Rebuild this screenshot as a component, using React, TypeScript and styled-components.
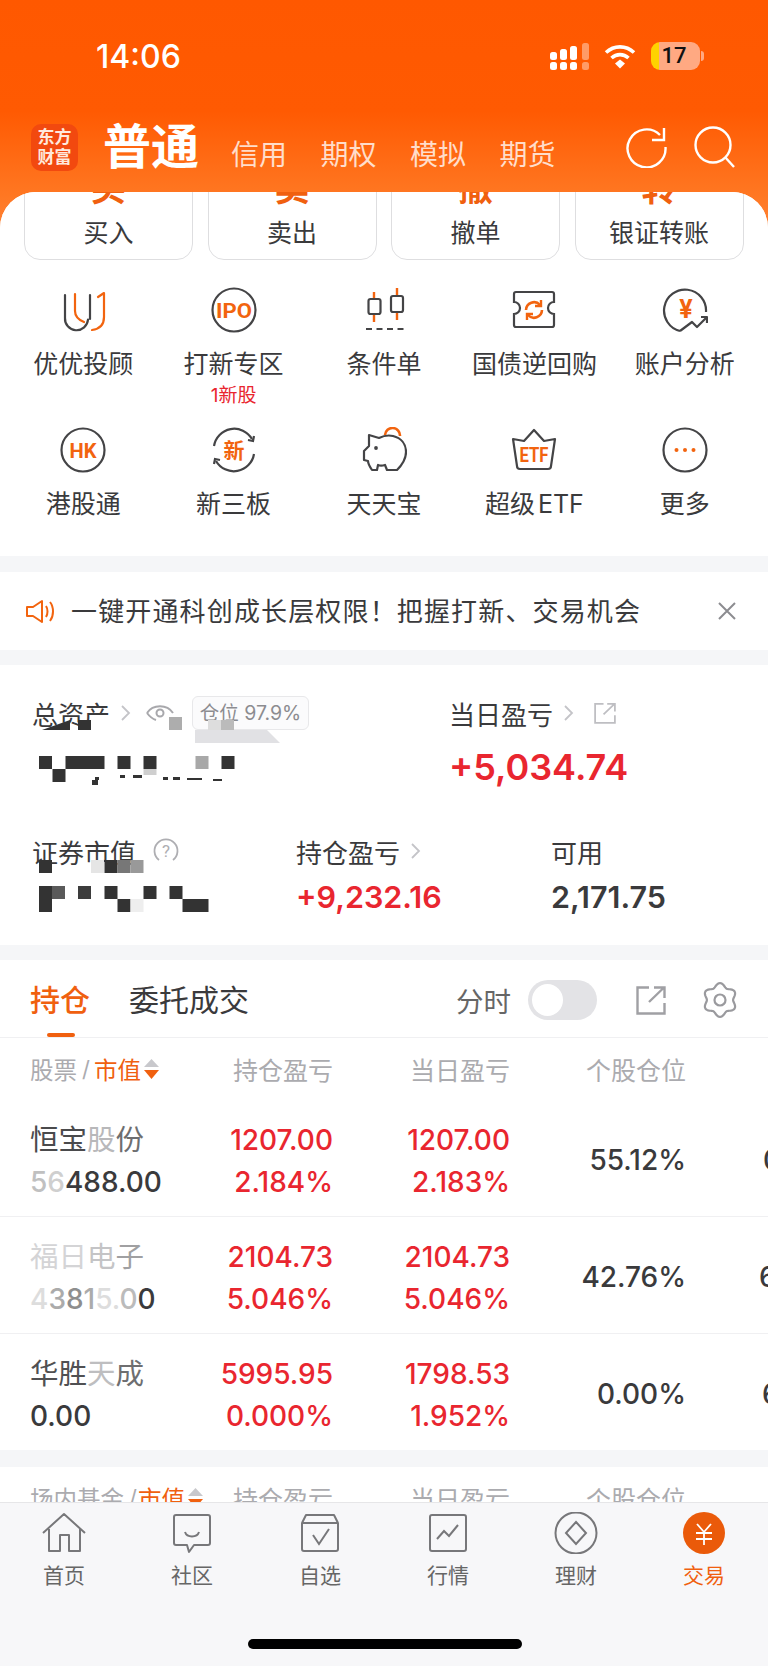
import React from 'react';
import styled, { createGlobalStyle } from 'styled-components';

const RED = '#E9262F';
const ORANGE = '#F0600F';
const INK = '#3A3A3C';

const Global = createGlobalStyle`
  html, body { margin: 0; padding: 0; background: #fff; }
  body { font-family: Inter, "Noto Sans CJK SC", sans-serif; color: ${INK}; }
  * { box-sizing: border-box; }
`;

const Page = styled.div`
  width: 768px; height: 1666px; overflow: hidden;
  display: flex; flex-direction: column; background: #F5F6F8;
`;

/* Every drawn icon shares this base; $ml is its distance from the item before it. */
const Glyph = styled.svg<{ $ml?: number }>`
  display: block; flex: none; margin-left: ${p => p.$ml ?? 0}px;
`;

/* ---------- header ---------- */
const Header = styled.header`
  flex: none; height: 232px;
  background: linear-gradient(180deg, #FF5800 0%, #FF5A02 48%, #FF7722 84%, #FF8336 100%);
  color: #fff;
`;
const StatusRow = styled.div`
  height: 112px; padding: 0 65px 0 96px;
  display: flex; align-items: center; gap: 14px;
`;
const Clock = styled.div`
  font-size: 32px; font-weight: 500; margin-right: auto;
`;
const Battery = styled.div`
  position: relative; width: 49px; height: 28px; border-radius: 9px; margin-left: 1px; margin-right: 3px;
  background: linear-gradient(90deg, #FFD200 0 8px, #FFA982 8px);
  color: #111; font: 500 22px/28px Roboto, sans-serif; text-align: center; padding-right: 3px;
  &::after {
    content: ''; position: absolute; right: -4px; top: 9px; width: 3px; height: 10px;
    border-radius: 0 3px 3px 0; background: #FFA982;
  }
`;
const TitleRow = styled.div`
  height: 70px; padding: 0 33px 0 31px; display: flex; align-items: center;
`;
const Logo = styled.div`
  width: 47px; height: 47px; border-radius: 10px; background: #F2490F; flex: none;
  font-size: 17px; line-height: 20px; font-weight: 700; text-align: center; padding-top: 3px;
  color: #FFE9DC;
`;
const ActiveMode = styled.div`
  font-size: 48px; line-height: 56px; font-weight: 700; margin: 0 32px 0 25px;
`;
const ModeList = styled.div`
  display: flex; gap: 33.5px; margin-top: 15px; flex: 1;
`;
const Mode = styled.span`
  font-size: 28px; line-height: 34px; color: rgba(255, 255, 255, 0.78);
`;
const HeaderActions = styled.div`
  display: flex; gap: 27px; align-items: center;
`;

/* ---------- panel + quick actions ---------- */
const Panel = styled.main`
  flex: 1; min-height: 0; margin-top: -40px; overflow: hidden;
  border-radius: 36px 36px 0 0; background: #F5F6F8;
`;
const TopCard = styled.section`
  background: #fff; padding-bottom: 36px;
`;
const TradeRow = styled.div`
  height: 68px; padding: 0 24px; display: grid;
  grid-template-columns: repeat(4, 169px); column-gap: 14.5px; overflow: hidden;
`;
const TradeButton = styled.div`
  height: 90px; margin-top: -22px; border: 1px solid #DEDEE0; border-radius: 16px;
  text-align: center; background: #fff;
`;
const TradeGlyph = styled.div`
  font-size: 35px; line-height: 35px; font-weight: 700; color: ${ORANGE};
`;
const TradeLabel = styled.div`
  font-size: 25px; line-height: 28px; margin-top: 13px; color: ${INK};
`;
const ToolGrid = styled.div`
  padding: 27px 8px 0; display: grid;
  grid-template-columns: repeat(5, 1fr); grid-template-rows: 140px 93px;
`;
const Tool = styled.div`
  display: flex; flex-direction: column; align-items: center;
`;
const ToolName = styled.div`
  font-size: 25px; line-height: 30px; margin-top: 16px; color: ${INK}; white-space: nowrap; word-spacing: -4px;
`;
const ToolNote = styled.div`
  font-size: 19px; line-height: 20px; margin-top: 7px; color: ${RED};
`;

/* ---------- notice ---------- */
const Notice = styled.section`
  height: 78px; margin-top: 16px; padding: 0 31px 0 25px; background: #fff;
  display: flex; align-items: center; justify-content: space-between;
`;
const NoticeText = styled.div`
  font-size: 26px; letter-spacing: 1.15px; color: ${INK}; margin: 0 0 3px 17px; flex: 1; white-space: nowrap;
`;

/* ---------- assets ---------- */
const Assets = styled.section`
  position: relative; height: 280px; margin-top: 15px; padding: 35px 0 0 32px; background: #fff;
`;
const AssetRow = styled.div<{ $cols: string; $top: number }>`
  display: grid; grid-template-columns: ${p => p.$cols}; margin-top: ${p => p.$top}px;
`;
const AssetLabel = styled.div`
  display: flex; align-items: center; height: 26px; font-size: 26px; color: ${INK}; white-space: nowrap;
`;
const AssetValue = styled.div<{ $size: number; $red?: boolean; $gap: number }>`
  font-size: ${p => p.$size}px; line-height: 40px; font-weight: 600; margin-top: ${p => p.$gap}px;
  color: ${p => (p.$red ? RED : INK)};
`;
const Ratio = styled.span`
  position: absolute; left: 192px; top: 31px; height: 34px; width: 117px; border: 1px solid #E8E8EA;
  border-radius: 6px; font-size: 19.5px; line-height: 32px; color: #8C8C90; text-align: center; background: #FBFBFC;
`;
const Mosaic = styled.svg`
  position: absolute; left: 0; top: 50px;
`;

/* ---------- holdings ---------- */
const Holdings = styled.section`
  margin-top: 15px; background: #fff;
`;
const TabBar = styled.div`
  height: 78px; padding: 3px 30px 0; display: flex; align-items: center; border-bottom: 1px solid #F0F0F2;
`;
const Tab = styled.div<{ $on?: boolean }>`
  position: relative; font-size: 30px; line-height: 40px; margin-right: 39px;
  color: ${p => (p.$on ? ORANGE : INK)}; font-weight: ${p => (p.$on ? 500 : 400)};
  ${p => p.$on && `
    &::after {
      content: ''; position: absolute; left: 17px; bottom: -17px; width: 28px; height: 4px;
      border-radius: 2px; background: ${ORANGE};
    }
  `}
`;
const TabTools = styled.div`
  margin-left: auto; display: flex; align-items: center;
`;
const TabHint = styled.span`
  font-size: 27.5px; color: #666; margin-right: 17px;
`;
const Toggle = styled.div`
  width: 69px; height: 40px; border-radius: 20px; background: #E3E3E6; padding: 4px; margin-right: 39px;
  &::before { content: ''; display: block; width: 31px; height: 32px; border-radius: 50%; background: #fff; }
`;
const ColumnRow = styled.div`
  display: grid; grid-template-columns: 170px 163px 177px 176px; height: 62px; align-items: center;
  font-size: 25px; color: #ABABAF; text-align: right; padding-bottom: 1px; white-space: nowrap;
`;
const SortHead = styled.div`
  display: flex; align-items: center; padding-left: 30px; white-space: nowrap; text-align: left; font-size: 23.5px;
`;
const Slash = styled.span`
  margin-left: 5px; font-size: 22px;
`;
const SortOn = styled.span<{ $gap: number }>`
  color: ${ORANGE}; margin-left: ${p => p.$gap}px;
`;
const StockRow = styled.div<{ $last?: boolean }>`
  display: grid; grid-template-columns: 170px 163px 177px 176px 82px; height: ${p => (p.$last ? 116 : 117)}px;
  padding-top: 19px; font-size: 28px; line-height: 42px; font-weight: 500; text-align: right; white-space: nowrap;
  border-bottom: ${p => (p.$last ? 'none' : '1px solid #F0F0F2')}; overflow: hidden;
`;
const NameCell = styled.div`
  padding-left: 30px; text-align: left; font-weight: 400; color: ${INK};
`;
const StockName = styled.div`
  font-size: 28.5px; font-weight: 400;
`;
const Amount = styled.div`
  font-weight: 500;
`;
const Tone = styled.span<{ $c: string }>`
  color: ${p => p.$c};
`;
const Gain = styled.div`
  color: ${RED};
`;
const Share = styled.div`
  padding-top: 20px; color: ${INK};
`;
const NextColumn = styled.div<{ $lead: number }>`
  padding: 20px 0 0 ${p => p.$lead}px; text-align: left; color: ${INK};
`;
const FundHead = styled.section`
  margin-top: 17px; background: #fff; height: 120px;
`;

/* ---------- bottom navigation ---------- */
const Nav = styled.nav`
  flex: none; height: 164px; background: #F7F7F9; border-top: 1px solid #E6E6E8; position: relative;
  display: grid; grid-template-columns: repeat(6, 1fr); align-items: start; padding-top: 9px;
`;
const NavItem = styled.div<{ $on?: boolean }>`
  display: flex; flex-direction: column; align-items: center;
  font-size: 21px; line-height: 28px; color: ${p => (p.$on ? ORANGE : '#666')};
`;
const NavLabel = styled.span`
  margin-top: 8px;
`;
const HomeBar = styled.div`
  position: absolute; left: 248px; top: 136px; width: 274px; height: 10px; border-radius: 5px; background: #000;
`;

/* ---------- drawings ---------- */
const S = '#444446';
const O = '#F2640F';

const Draw: React.FC<{ size?: number; w?: number; h?: number; children: React.ReactNode }> = ({ size = 46, w, h, children }) => (
  <Glyph width={w ?? size} height={h ?? size} viewBox={`0 0 ${w ?? size} ${h ?? size}`} fill="none">
    {children}
  </Glyph>
);

/* Condensed orange lettering inside the round tool icons. */
const Mark: React.FC<{ x?: number; y?: number; fs?: number; fit?: number; children: React.ReactNode }> = ({ x = 23, y = 29, fs = 17, fit, children }) => (
  <text
    x={x} y={y} fontSize={fs} fontWeight={700} fill={O} textAnchor="middle"
    fontFamily='Roboto, "Noto Sans CJK SC", sans-serif'
    {...(fit ? { textLength: fit, lengthAdjust: 'spacingAndGlyphs' as const } : {})}
  >{children}</text>
);

const Ring = () => <circle cx="23" cy="23" r="21.5" stroke={S} strokeWidth="2.2" />;

const tools: { name: string; note?: string; icon: React.ReactNode }[] = [
  {
    name: '优优投顾',
    icon: (
      <Draw>
        <path d="M5 8V31a11.5 11.5 0 0 0 23 1.5" stroke={S} strokeWidth="2.2" strokeLinecap="round" />
        <path d="M30 8V32" stroke={S} strokeWidth="2.2" strokeLinecap="round" />
        <path d="M15 7V24c0 6 4 9 9 11" stroke={O} strokeWidth="2.2" strokeLinecap="round" />
        <path d="M32 43c8-1 12-6 12-13V6l-6 4" stroke={O} strokeWidth="2.2" strokeLinecap="round" strokeLinejoin="round" />
      </Draw>
    ),
  },
  { name: '打新专区', note: '1新股', icon: <Draw><Ring /><Mark fs={21} y={30.5} fit={36}>IPO</Mark></Draw> },
  {
    name: '条件单',
    icon: (
      <Draw>
        <path d="M13 5V35M36 1V33" stroke={O} strokeWidth="2.4" />
        <rect x="7.5" y="12" width="12" height="15" rx="2" fill="#fff" stroke={S} strokeWidth="2.2" />
        <rect x="30" y="9" width="12" height="16" rx="2" fill="#fff" stroke={S} strokeWidth="2.2" />
        <path d="M5 42H45" stroke={S} strokeWidth="2.2" strokeDasharray="6 4.5" />
      </Draw>
    ),
  },
  {
    name: '国债逆回购',
    icon: (
      <Draw>
        <path d="M5 5H41a2 2 0 0 1 2 2V15a6 6 0 0 0 0 12V38a2 2 0 0 1-2 2H5a2 2 0 0 1-2-2V27a6 6 0 0 0 0-12V7a2 2 0 0 1 2-2Z" stroke={S} strokeWidth="2.2" />
        <path d="M15 23a8 8 0 0 1 14-5M31 23a8 8 0 0 1-14 5" stroke={O} strokeWidth="2.6" />
        <path d="M30 13v6h-6M16 33v-6h6" stroke={O} strokeWidth="2.4" />
      </Draw>
    ),
  },
  {
    name: '账户分析',
    icon: (
      <Draw>
        <path d="M18 44A21 21 0 1 1 44 25" stroke={S} strokeWidth="2.2" />
        <path d="M18 44L30 35L35 40L45 30M39 30H45V36" stroke={S} strokeWidth="2.2" strokeLinejoin="round" />
        <Mark x={24} y={31} fs={25}>¥</Mark>
      </Draw>
    ),
  },
  { name: '港股通', icon: <Draw><Ring /><Mark y={30.5} fs={21} fit={27}>HK</Mark></Draw> },
  {
    name: '新三板',
    icon: (
      <Draw>
        <path d="M3 19A20.5 20.5 0 0 1 41 12" stroke={S} strokeWidth="2.2" />
        <path d="M43 27A20.5 20.5 0 0 1 5 34" stroke={S} strokeWidth="2.2" />
        <path d="M37 13l5 1 1-5M9 33l-5-1-1 5" stroke={S} strokeWidth="2.2" />
        <Mark y={30.5} fs={21}>新</Mark>
      </Draw>
    ),
  },
  {
    name: '天天宝',
    icon: (
      <Draw>
        <path d="M24 8a7.5 7.5 0 0 1 15 1" stroke={O} strokeWidth="2.6" />
        <path d="M8 8L18 11C22 9 28 8 32 9C40 11 45 17 45 25C45 33 41 38 36 43H26L24 38C21 39 19 39 17 38L16 43H11C9 40 7 36 7 34L3 33V24L8 19Z" stroke={S} strokeWidth="2.2" strokeLinejoin="round" />
        <circle cx="15" cy="21" r="1.900" fill={S} />
      </Draw>
    ),
  },
  {
    name: '超级 ETF',
    icon: (
      <Draw>
        <path d="M2 12L13 14L23 3L33 14L44 12L40 39a3 3 0 0 1-3 3H9a3 3 0 0 1-3-3Z" stroke={S} strokeWidth="2.2" strokeLinejoin="round" />
        <Mark y={35} fs={21} fit={29}>ETF</Mark>
      </Draw>
    ),
  },
  {
    name: '更多',
    icon: (
      <Draw>
        <Ring />
        <circle cx="14.500" cy="23" r="2" fill={O} />
        <circle cx="23" cy="23" r="2" fill={O} />
        <circle cx="31.500" cy="23" r="2" fill={O} />
      </Draw>
    ),
  },
];

const Chevron = () => (
  <Glyph $ml={10} width="11" height="18" viewBox="0 0 11 18" fill="none">
    <path d="M2 2L9 9L2 16" stroke="#C4C4C8" strokeWidth="1.800" />
  </Glyph>
);

const Launch: React.FC<{ size: number; color: string; ml: number }> = ({ size, color, ml }) => (
  <Glyph $ml={ml} width={size} height={size} viewBox="0 0 30 30" fill="none">
    <path d="M13 2.500H1.500V28.500H28.500V18" stroke={color} strokeWidth="2.400" />
    <path d="M13 17L28 2.500M18 2.500H28.500V13" stroke={color} strokeWidth="2.400" />
  </Glyph>
);

/* Six-lobed outline of the settings wheel, traced around its centre. */
const gearOutline = (() => {
  const pts: string[] = [];
  for (let i = 0; i < 96; i++) {
    const a = (i / 96) * Math.PI * 2;
    const r = 15 + 1.900 * Math.cos(6 * a);
    pts.push(`${(18 + r * Math.sin(a)).toFixed(2)} ${(18 - r * Math.cos(a)).toFixed(2)}`);
  }
  return `M${pts.join('L')}Z`;
})();

/* Privacy squares laid over the balances; coordinates are x, y, w, h, fill. */
const blocks: [number, number, number, number, string][] = [
  [78, 5, 13, 10, '#333'], [169, 2, 13, 13, '#ADADAD'], [208, 5, 13, 10, '#DDD'], [221, 5, 13, 10, '#BBB'],
  [195, 15, 72, 13, '#E1E1E4'],
  [39, 41, 13, 13, '#333'], [65.500, 41, 39, 13, '#333'], [117.500, 41, 13, 13, '#333'], [143.500, 41, 13, 13, '#333'],
  [195.500, 41, 13, 13, '#A8A8A8'], [221.500, 41, 13, 13, '#333'],
  [52.500, 54, 13, 13, '#333'], [143.500, 54, 13, 6, '#CFCFCF'],
  [95, 62, 4, 3, '#333'], [92, 65, 6, 5, '#333'], [120, 60, 5, 3, '#333'], [133, 60, 9, 3, '#333'], [163, 62, 5, 3, '#333'],
  [173, 62, 7, 3, '#333'], [187, 63, 15, 2, '#333'], [213, 64, 9, 2, '#333'],
  [30, 122, 30, 4, '#fff'],
  [39, 145, 13, 13, '#333'], [91, 145, 13, 13, '#E5E5E5'], [104.500, 145, 13, 13, '#333'], [117.500, 145, 13, 13, '#777'], [130.500, 145, 13, 13, '#999'],
  [39, 171, 13, 26, '#333'], [52, 171, 13, 13, '#5A5A5A'], [78, 171, 13, 13, '#3C3C3C'], [104.500, 171, 13, 13, '#333'],
  [117.500, 184, 13, 13, '#333'], [130.500, 184, 13, 13, '#EEE'], [143.500, 171, 13, 13, '#333'], [169.500, 171, 13, 13, '#333'],
  [182.500, 184, 26, 13, '#333'],
];

type Part = [string, string];
const stocks: { name: Part[]; amount: Part[]; a: string; ap: string; b: string; bp: string; share: string; next: string; lead: number }[] = [
  {
    name: [['恒宝', '#4A4A4C'], ['股', '#B8B8BA'], ['份', '#6E6E70']],
    amount: [['5', '#C0C0C0'], ['6', '#CFCFCF'], ['488.00', INK]],
    a: '1207.00', ap: '2.184%', b: '1207.00', bp: '2.183%', share: '55.12%', next: '0', lead: 77,
  },
  {
    name: [['福日', '#D4D4D6'], ['电', '#C4C4C6'], ['子', '#A0A0A2']],
    amount: [['4', '#DDD'], ['3', '#ABABAB'], ['8', '#8E8E8E'], ['1', '#ABABAB'], ['5.', '#DDD'], ['0', '#BBB'], ['0', INK]],
    a: '2104.73', ap: '5.046%', b: '2104.73', bp: '5.046%', share: '42.76%', next: '6', lead: 73,
  },
  {
    name: [['华胜', '#505052'], ['天', '#BEBEC0'], ['成', '#6E6E70']],
    amount: [['0.00', INK]],
    a: '5995.95', ap: '0.000%', b: '1798.53', bp: '1.952%', share: '0.00%', next: '6', lead: 76,
  },
];

const SortMark = () => (
  <Glyph $ml={3} width="15" height="20" viewBox="0 0 15 20">
    <path d="M7.500 0L15 8H0Z" fill="#C8C8CC" />
    <path d="M7.500 20L15 11H0Z" fill={ORANGE} />
  </Glyph>
);

const N = '#77777A';
const nav: { label: string; on?: boolean; icon: React.ReactNode }[] = [
  {
    label: '首页',
    icon: <Draw w={44} h={42}><path d="M1 21L22 2L43 21M7 17V39H18V23H27V39H38V17" stroke={N} strokeWidth="2" strokeLinejoin="round" /></Draw>,
  },
  {
    label: '社区',
    icon: (
      <Draw w={44} h={42}>
        <path d="M6 3H38a2 2 0 0 1 2 2V31a2 2 0 0 1-2 2H24L19 40L17 33H6a2 2 0 0 1-2-2V5a2 2 0 0 1 2-2Z" stroke={N} strokeWidth="2" strokeLinejoin="round" />
        <path d="M15 20c2 6 12 6 14 0" stroke={N} strokeWidth="2" />
      </Draw>
    ),
  },
  {
    label: '自选',
    icon: (
      <Draw w={44} h={42}>
        <path d="M4 11H40V37a2 2 0 0 1-2 2H6a2 2 0 0 1-2-2ZM4 11L8 3H36L40 11" stroke={N} strokeWidth="2" strokeLinejoin="round" />
        <path d="M15 23L21 32L31 17" stroke={N} strokeWidth="2" />
      </Draw>
    ),
  },
  {
    label: '行情',
    icon: (
      <Draw w={44} h={42}>
        <rect x="4" y="3" width="36" height="36" rx="2" stroke={N} strokeWidth="2" />
        <path d="M11 27L18 19L23 24L32 13" stroke={N} strokeWidth="2" />
      </Draw>
    ),
  },
  {
    label: '理财',
    icon: (
      <Draw w={44} h={42}>
        <circle cx="22" cy="21" r="20.500" stroke={N} strokeWidth="2" />
        <path d="M22 10L32 21L22 32L12 21Z" stroke={N} strokeWidth="2" />
      </Draw>
    ),
  },
  {
    label: '交易', on: true,
    icon: (
      <Draw w={44} h={42}>
        <circle cx="22" cy="21" r="21" fill="#EA5A0A" />
        <path d="M15 12L22 20L29 12M14 21H30M14 27H30M22 20V33" stroke="#fff" strokeWidth="1.800" />
      </Draw>
    ),
  },
];

export default function App() {
  return (
    <Page>
      <Global />
      <Header>
        <StatusRow>
          <Clock>14:06</Clock>
          <Draw w={40} h={27}>
            <g fill="#fff">
              <rect x="0" y="9" width="7" height="8" rx="2.500" /><rect x="10" y="6" width="7" height="11" rx="2.500" />
              <rect x="20" y="3" width="7" height="14" rx="2.500" />
              <rect x="0" y="19" width="7" height="8" rx="2.500" /><rect x="10" y="19" width="7" height="8" rx="2.500" />
              <rect x="20" y="19" width="7" height="8" rx="2.500" />
              <g opacity="0.4"><rect x="32" y="0" width="7" height="17" rx="2.500" /><rect x="32" y="19" width="7" height="8" rx="2.500" /></g>
            </g>
          </Draw>
          <Draw w={32} h={25}>
            <path d="M2 8.500C10 1 22 1 30 8.500" stroke="#fff" strokeWidth="3.600" />
            <path d="M7.500 14C12.500 9.500 19.500 9.500 24.500 14" stroke="#fff" strokeWidth="3.600" />
            <path d="M11 19.500L16 15.500L21 19.500L16 24.500Z" fill="#fff" />
          </Draw>
          <Battery>17</Battery>
        </StatusRow>
        <TitleRow>
          <Logo>东方<br />财富</Logo>
          <ActiveMode>普通</ActiveMode>
          <ModeList>
            <Mode>信用</Mode><Mode>期权</Mode><Mode>模拟</Mode><Mode>期货</Mode>
          </ModeList>
          <HeaderActions>
            <Draw w={41} h={42}>
              <path d="M34 9A19 19 0 1 0 39.500 21" stroke="#fff" strokeWidth="2.400" />
              <path d="M26 14H38V2" stroke="#fff" strokeWidth="2.400" />
            </Draw>
            <Draw w={41} h={42}>
              <circle cx="19" cy="19" r="17.500" stroke="#fff" strokeWidth="2.400" />
              <path d="M31 31L40 41" stroke="#fff" strokeWidth="2.400" />
            </Draw>
          </HeaderActions>
        </TitleRow>
      </Header>

      <Panel>
        <TopCard>
          <TradeRow>
            {[['买', '买入'], ['卖', '卖出'], ['撤', '撤单'], ['转', '银证转账']].map(([g, t]) => (
              <TradeButton key={t}>
                <TradeGlyph>{g}</TradeGlyph>
                <TradeLabel>{t}</TradeLabel>
              </TradeButton>
            ))}
          </TradeRow>
          <ToolGrid>
            {tools.map(t => (
              <Tool key={t.name}>
                {t.icon}
                <ToolName>{t.name}</ToolName>
                {t.note && <ToolNote>{t.note}</ToolNote>}
              </Tool>
            ))}
          </ToolGrid>
        </TopCard>

        <Notice>
          <Draw w={29} h={25}>
            <path d="M2 8H8L17 2V23L8 17H2Z" stroke={O} strokeWidth="2" strokeLinejoin="round" />
            <path d="M21 7c2 3 2 8 0 11M25 3c4 5 4 14 0 19" stroke={O} strokeWidth="2" />
          </Draw>
          <NoticeText>一键开通科创成长层权限！把握打新、交易机会</NoticeText>
          <Draw w={20} h={18}>
            <path d="M2 1L18 17M18 1L2 17" stroke="#8C8C90" strokeWidth="2" />
          </Draw>
        </Notice>

        <Assets>
          <AssetRow $cols="417px 1fr" $top={0}>
            <div>
              <AssetLabel>
                总资产<Chevron />
                <Glyph $ml={15} width="28" height="16" viewBox="0 0 28 16" fill="none">
                  <path d="M1 8C7 -1 21 -1 27 8" stroke="#A8A8AC" strokeWidth="2" />
                  <path d="M1 8C4 12 7 14 10 15" stroke="#A8A8AC" strokeWidth="2" />
                  <circle cx="14" cy="8" r="3.500" stroke="#A8A8AC" strokeWidth="2" />
                </Glyph>
              </AssetLabel>
              <AssetValue $size={30} $gap={21}>&nbsp;</AssetValue>
            </div>
            <div>
              <AssetLabel>
                当日盈亏<Chevron />
                <Launch size={22} color="#BEBEC2" ml={20} />
              </AssetLabel>
              <AssetValue $size={36} $red $gap={21}>+5,034.74</AssetValue>
            </div>
          </AssetRow>
          <AssetRow $cols="264px 255px 1fr" $top={51}>
            <div>
              <AssetLabel>
                证券市值
                <Glyph $ml={17} width="26" height="26" viewBox="0 0 26 26" fill="none">
                  <path d="M6 22A11.500 11.500 0 1 1 20 22" stroke="#AEAEB2" strokeWidth="1.800" />
                  <text x="13" y="19" fontSize="17" textAnchor="middle" fill="#AEAEB2" fontFamily="Roboto, sans-serif">?</text>
                </Glyph>
              </AssetLabel>
            </div>
            <div>
              <AssetLabel>持仓盈亏<Chevron /></AssetLabel>
              <AssetValue $size={30.500} $red $gap={13}>+9,232.16</AssetValue>
            </div>
            <div>
              <AssetLabel>可用</AssetLabel>
              <AssetValue $size={30.500} $gap={13}>2,171.75</AssetValue>
            </div>
          </AssetRow>
          <Ratio>仓位 97.9%</Ratio>
          <Mosaic width="300" height="200" viewBox="0 0 300 200">
            {blocks.map(([x, y, w, h, f], i) => <rect key={i} x={x} y={y} width={w} height={h} fill={f} />)}
            <path d="M42 15L70 5V15Z" fill="#333" />
            <path d="M267 15L280 28H267Z" fill="#E1E1E4" />
          </Mosaic>
        </Assets>

        <Holdings>
          <TabBar>
            <Tab $on>持仓</Tab>
            <Tab>委托成交</Tab>
            <TabTools>
              <TabHint>分时</TabHint>
              <Toggle />
              <Launch size={30} color="#A0A0A4" ml={0} />
              <Glyph $ml={36} width="36" height="36" viewBox="0 0 36 36" fill="none">
                <path d={gearOutline} stroke="#9A9A9E" strokeWidth="2.200" strokeLinejoin="round" />
                <circle cx="18" cy="18" r="5.500" stroke="#9A9A9E" strokeWidth="2.200" />
              </Glyph>
            </TabTools>
          </TabBar>
          <ColumnRow>
            <SortHead>股票<Slash>/</Slash><SortOn $gap={4}>市值</SortOn><SortMark /></SortHead>
            <div>持仓盈亏</div><div>当日盈亏</div><div>个股仓位</div>
          </ColumnRow>
          {stocks.map((s, i) => (
            <StockRow key={s.a + s.bp} $last={i === stocks.length - 1}>
              <NameCell>
                <StockName>{s.name.map(([t, c], k) => <Tone key={k} $c={c}>{t}</Tone>)}</StockName>
                <Amount>{s.amount.map(([t, c], k) => <Tone key={k} $c={c}>{t}</Tone>)}</Amount>
              </NameCell>
              <Gain>{s.a}<br />{s.ap}</Gain>
              <Gain>{s.b}<br />{s.bp}</Gain>
              <Share>{s.share}</Share>
              <NextColumn $lead={s.lead}>{s.next}</NextColumn>
            </StockRow>
          ))}
        </Holdings>

        <FundHead>
          <ColumnRow>
            <SortHead>场内基金<Slash>/</Slash><SortOn $gap={1}>市值</SortOn><SortMark /></SortHead>
            <div>持仓盈亏</div><div>当日盈亏</div><div>个股仓位</div>
          </ColumnRow>
        </FundHead>
      </Panel>

      <Nav>
        {nav.map(n => (
          <NavItem key={n.label} $on={n.on}>
            {n.icon}
            <NavLabel>{n.label}</NavLabel>
          </NavItem>
        ))}
        <HomeBar />
      </Nav>
    </Page>
  );
}
